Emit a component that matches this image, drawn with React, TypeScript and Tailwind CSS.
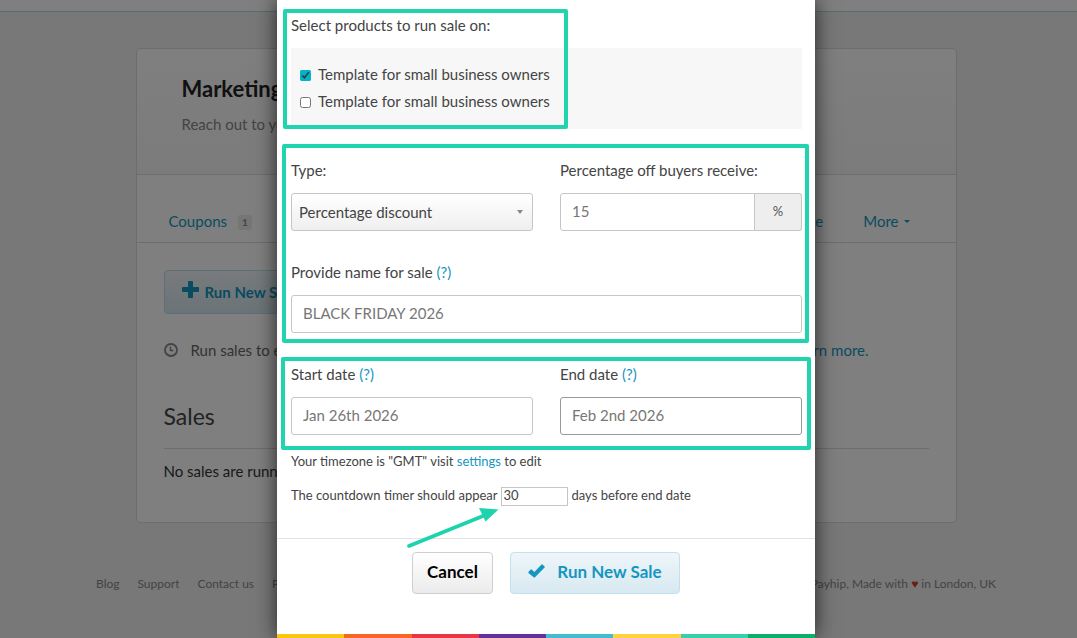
import type { ReactNode } from 'react';

const stripes = [
  'bg-[#f9c80e]',
  'bg-[#f86624]',
  'bg-[#ea3546]',
  'bg-[#662e9b]',
  'bg-[#43bccd]',
  'bg-[#ffd23f]',
  'bg-[#3bceac]',
  'bg-[#0ead69]',
];

const labelClass = 'block text-[15px] leading-[22px] text-[#444]';
const fieldClass =
  'block h-[38px] w-full min-w-0 border bg-white px-[11px] pb-[2px] text-[15px] text-[#777] outline-none';

function Help() {
  return (
    <a href="#help" className="text-[#1596c1]">
      (?)
    </a>
  );
}

function Field({ id, label, children }: { id: string; label: ReactNode; children: ReactNode }) {
  return (
    <div className="flex flex-col gap-3">
      <label htmlFor={id} className={labelClass}>
        {label}
      </label>
      {children}
    </div>
  );
}

function Highlight({ className }: { className: string }) {
  return (
    <div
      aria-hidden="true"
      className={'pointer-events-none absolute rounded-[2px] border-4 border-[#22d3b0] ' + className}
    />
  );
}

function MarketingPage() {
  return (
    <div className="min-h-screen bg-[#f0f0f0]">
      <div className="h-3 border-b border-[#a9dfe6] bg-white" />
      <div className="pl-[15px]">
        <main className="mx-auto mt-9 max-w-[821px] rounded-[5px] border border-[#dadada] bg-white">
          <header className="h-[126px] rounded-t-[5px] border-b border-[#dadada] bg-linear-to-b from-white to-[#f7f7f7] pt-[26px] pl-[45px]">
            <h1 className="text-[22px] leading-7 font-bold text-[#222]">Marketing</h1>
            <p className="mt-[10px] text-[15px] leading-[22px] text-[#888]">Reach out to your customers</p>
          </header>
          <nav className="flex h-[68px] items-end border-b border-[#dadada] pr-[46px] pl-8 text-[15px] leading-[22px] text-[#1596c1]">
            <a href="#coupons" className="flex items-center pb-[10px]">
              Coupons
              <span className="mt-[3px] ml-[11px] rounded-[2px] bg-[#ececec] px-1 text-[10px] leading-[15px] font-bold text-[#888]">
                1
              </span>
            </a>
            <a
              href="#sales"
              className="ml-[25px] h-[39px] rounded-t-[4px] border border-b-0 border-[#dadada] bg-white px-5 pt-[7px] text-[#444]"
            >
              Sales
            </a>
            <a href="#sale" className="ml-auto pb-[10px]">
              Sale
            </a>
            <a href="#more" className="ml-10 flex items-center gap-[5px] pb-[10px]">
              More
              <span className="border-x-[3px] border-t-[3px] border-x-transparent border-t-[#1596c1]" />
            </a>
          </nav>
          <div className="px-[27px] pt-[27px] pb-10">
            <button
              type="button"
              className="flex h-11 items-center gap-[6px] rounded-[4px] border border-[#bfdcea] bg-linear-to-b from-[#f0f6f9] to-[#d6e8f0] px-[17px] text-[15px] font-bold text-[#1596c1]"
            >
              <svg viewBox="0 0 17 17" className="mb-[6px] size-[17px]" fill="currentColor">
                <path d="M7 0h3a1 1 0 0 1 1 1v5h5a1 1 0 0 1 1 1v3a1 1 0 0 1-1 1h-5v5a1 1 0 0 1-1 1H7a1 1 0 0 1-1-1v-5H1a1 1 0 0 1-1-1V7a1 1 0 0 1 1-1h5V1a1 1 0 0 1 1-1z" />
              </svg>
              Run New Sale
            </button>
            <p className="mt-[25px] flex items-center pr-[60px] text-[15px] leading-[22px] text-[#666]">
              <svg viewBox="0 0 14 14" className="mr-[13px] size-[14px]" fill="none" stroke="#888">
                <circle cx="7" cy="7" r="6" strokeWidth="1.8" />
                <path d="M6.500 3.600V7.500H9.400" strokeWidth="1.500" />
              </svg>
              Run sales to entice buyers
              <a href="#learn" className="ml-auto text-[#1596c1]">
                Learn more.
              </a>
            </p>
            <h2 className="mt-10 text-[23px] leading-[30px] text-[#444]">Sales</h2>
            <hr className="mt-[17px] border-[#dadada]" />
            <p className="mt-[11px] text-[15px] leading-[22px] text-[#333]">No sales are running</p>
          </div>
        </main>
        <footer className="mx-auto mt-[52px] flex max-w-[900px] justify-between text-[12px] leading-[18px] text-[#888]">
          <nav className="flex gap-[18px]">
            <a href="#blog">Blog</a>
            <a href="#support">Support</a>
            <a href="#contact">Contact us</a>
            <a href="#partners">Partners</a>
          </nav>
          <p>
            © Payhip, Made with <span className="text-[#d9362b]">♥</span> in London, UK
          </p>
        </footer>
      </div>
    </div>
  );
}

function SaleDialog() {
  return (
    <form
      role="dialog"
      aria-label="Run new sale"
      onSubmit={(e) => e.preventDefault()}
      className="relative mx-auto w-full max-w-[538px] bg-white pt-[14px] shadow-[0_0_20px_rgba(0,0,0,0.7)]"
    >
      <div className="pr-[13px] pl-[14px]">
        <div className="relative">
          <fieldset>
            <legend className={labelClass}>Select products to run sale on:</legend>
            <div className="mt-3 bg-[#f7f7f7] pt-[13px] pb-[14px] pl-[9px] text-[15px] leading-[27px] text-[#444]">
              <label className="flex items-center gap-[7px]">
                <input type="checkbox" defaultChecked className="mt-[2px] size-[11px] accent-[#00b5cb]" />
                Template for small business owners
              </label>
              <label className="flex items-center gap-[7px]">
                <input type="checkbox" className="mt-[2px] size-[11px] accent-[#00b5cb]" />
                Template for small business owners
              </label>
            </div>
          </fieldset>
          <Highlight className="-top-[5px] -left-2 h-[120px] w-[285px]" />
        </div>

        <div className="relative mt-[30px] flex flex-col gap-[30px]">
          <div className="grid grid-cols-2 gap-[27px]">
            <Field id="type" label="Type:">
              <div className="relative">
                <select
                  id="type"
                  className="block h-[38px] w-full appearance-none rounded-[3px] border border-[#c6c6c6] bg-linear-to-b from-white to-[#efefef] px-[7px] text-[15px] text-[#444] outline-none"
                >
                  <option>Percentage discount</option>
                </select>
                <span className="pointer-events-none absolute top-[17px] right-[10px] border-x-[3px] border-t-4 border-x-transparent border-t-[#888]" />
              </div>
            </Field>
            <Field id="percent" label="Percentage off buyers receive:">
              <div className="flex">
                <input
                  id="percent"
                  defaultValue="15"
                  className={fieldClass + ' rounded-l-[3px] border-[#c6c6c6]'}
                />
                <span className="flex w-[47px] shrink-0 items-center justify-center rounded-r-[3px] border border-l-0 border-[#c6c6c6] bg-[#eee] text-[13px] text-[#555]">
                  %
                </span>
              </div>
            </Field>
          </div>
          <Field
            id="name"
            label={
              <>
                Provide name for sale <Help />
              </>
            }
          >
            <input
              id="name"
              defaultValue="BLACK FRIDAY 2026"
              className={fieldClass + ' rounded-[3px] border-[#c6c6c6]'}
            />
          </Field>
          <Highlight className="-top-[15px] -right-[7px] -bottom-[10px] -left-[9px]" />
        </div>

        <div className="relative mt-[30px] grid grid-cols-2 gap-[27px]">
          <Field
            id="start"
            label={
              <>
                Start date <Help />
              </>
            }
          >
            <input
              id="start"
              defaultValue="Jan 26th 2026"
              className={fieldClass + ' rounded-[3px] border-[#c6c6c6]'}
            />
          </Field>
          <Field
            id="end"
            label={
              <>
                End date <Help />
              </>
            }
          >
            <input
              id="end"
              defaultValue="Feb 2nd 2026"
              className={fieldClass + ' rounded-[3px] border-[#999]'}
            />
          </Field>
          <Highlight className="-top-[6px] -right-[9px] -bottom-[15px] -left-[10px]" />
        </div>

        <p className="mt-[17px] text-[13px] leading-[18px] text-[#444]">
          Your timezone is "GMT" visit{' '}
          <a href="#settings" className="text-[#1596c1]">
            settings
          </a>{' '}
          to edit
        </p>
        <div className="relative mt-4 flex h-5 items-center text-[13px] text-[#444]">
          <label htmlFor="days">The countdown timer should appear</label>
          <input
            id="days"
            defaultValue="30"
            className="mr-1 ml-[3px] h-[19px] w-[67px] border border-[#c6c6c6] bg-white px-[2px] text-[13px] text-[#444] outline-none"
          />
          <span>days before end date</span>
          <svg
            aria-hidden="true"
            viewBox="0 0 94 42"
            className="pointer-events-none absolute top-5 left-[115px] h-[42px] w-[94px]"
          >
            <path d="M3 40L77 10" stroke="#1dd3ae" strokeWidth="3.600" strokeLinecap="round" />
            <path d="M73 2L92.500 3.500L79.500 15.500Z" fill="#1dd3ae" />
          </svg>
        </div>
      </div>

      <div className="mt-8 flex justify-center gap-[17px] border-t border-[#e3e3e3] pt-[13px] pb-10 text-[17px] font-bold">
        <button
          type="button"
          className="h-[42px] w-[81px] rounded-[4px] border border-[#cfcfcf] bg-linear-to-b from-white to-[#ebebeb] pb-[2px] text-black"
        >
          Cancel
        </button>
        <button
          type="submit"
          className="flex h-[42px] w-[170px] items-center justify-center gap-3 rounded-[4px] border border-[#c3e0ee] bg-linear-to-b from-[#eef6fa] to-[#d8e9f1] pb-[2px] text-[#1596c1]"
        >
          <svg viewBox="0 0 17 14" className="mb-[2px] h-[14px] w-[17px]" fill="currentColor">
            <path d="M0.400 7.900L2.700 5.600Q3.200 5.200 3.700 5.600L6.400 7.900L13.500 0.600Q14 0.100 14.500 0.600L16.600 2.600Q17 3.100 16.600 3.600L7 13.200Q6.300 13.800 5.600 13.200L0.500 9Q0 8.400 0.400 7.900Z" />
          </svg>
          Run New Sale
        </button>
      </div>
      <div className="flex h-1">
        {stripes.map((color) => (
          <span key={color} className={'flex-1 ' + color} />
        ))}
      </div>
    </form>
  );
}

export default function App() {
  return (
    <div className="relative min-h-screen font-['Lato','Liberation_Sans',sans-serif] font-normal">
      <MarketingPage />
      <div className="absolute inset-0 overflow-hidden bg-black/50 pl-[15px]">
        <SaleDialog />
      </div>
    </div>
  );
}
